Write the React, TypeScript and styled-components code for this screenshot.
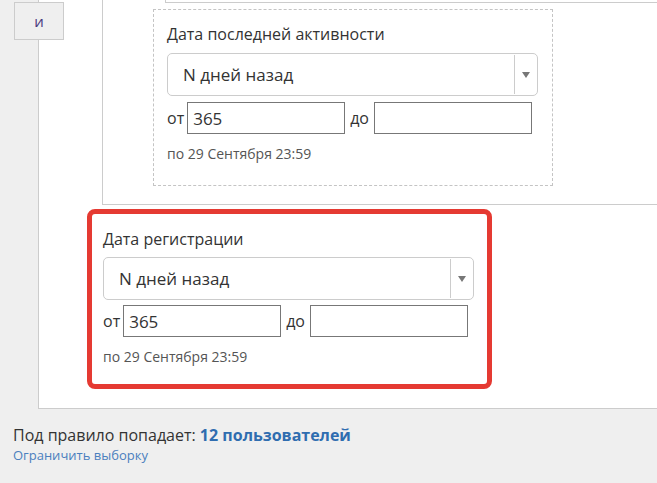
import React from "react";
import styled, { createGlobalStyle } from "styled-components";

const GlobalStyle = createGlobalStyle`
  html, body {
    margin: 0;
    padding: 0;
    background: #efefef;
    font-family: "Open Sans", "Liberation Sans", Arial, sans-serif;
    color: #333;
  }
  * { box-sizing: border-box; }
`;

const Page = styled.div`
  position: relative;
  width: 657px;
  height: 483px;
  overflow: hidden;
`;

const LogicTag = styled.div`
  position: absolute;
  left: 14px;
  top: 2px;
  width: 50px;
  height: 38px;
  background: #efefef;
  border: 1px solid #ccc;
  display: flex;
  align-items: center;
  justify-content: center;
  font-size: 15px;
  color: #4a3c7e;
  z-index: 2;
`;

const Panel = styled.div`
  margin-left: 38px;
  background: #fff;
  border-left: 1px solid #ccc;
  border-bottom: 1px solid #ccc;
  padding-bottom: 19px;
`;

const Group = styled.div`
  margin-left: 63px;
  border-left: 1px solid #ccc;
  border-bottom: 1px solid #ccc;
  padding-bottom: 18px;
`;

const PrevField = styled.div`
  margin-left: 62px;
  height: 3px;
  border-left: 1px solid #ccc;
  border-bottom: 1px solid #ccc;
`;

const DashedBox = styled.div`
  margin: 6px 0 0 50px;
  width: 400px;
  border: 1px dashed #c4c4c4;
  padding: 14px 13px 22px 13px;
`;

const HighlightBox = styled.div`
  margin: 4px 0 0 48px;
  width: 405px;
  border: 5px solid #e53a32;
  border-radius: 8px;
  padding: 15px 11px 18px 11px;
`;

const Label = styled.div<{ $tight?: boolean }>`
  font-size: 16px;
  line-height: 20px;
  color: #333;
  margin-bottom: ${(p) => (p.$tight ? "8px" : "9px")};
`;

const Select = styled.div`
  width: 371px;
  height: 43px;
  border: 1px solid #ccc;
  border-radius: 5px;
  display: flex;
  align-items: stretch;
`;

const SelectValue = styled.div`
  flex: 1;
  display: flex;
  align-items: center;
  padding-left: 15px;
  font-size: 17px;
  color: #333;
`;

const SelectArrow = styled.div`
  width: 23px;
  border-left: 1px solid #ccc;
  display: flex;
  align-items: center;
  justify-content: center;
  margin: 1px 0;
`;

const Range = styled.div<{ $tight?: boolean }>`
  display: flex;
  align-items: center;
  margin-top: ${(p) => (p.$tight ? "5px" : "6px")};
`;

const RangeWord = styled.span<{ $gap?: boolean }>`
  font-size: 16px;
  color: #333;
  margin-right: ${(p) => (p.$gap ? "5px" : "3px")};
  margin-left: ${(p) => (p.$gap ? "5px" : "0")};
`;

const NumInput = styled.input`
  width: 158px;
  height: 32px;
  border: 1px solid #777;
  border-radius: 0;
  padding: 0 5px;
  font-family: inherit;
  font-size: 17px;
  color: #333;
  outline: none;
`;

const Hint = styled.div`
  margin-top: 11px;
  font-size: 14px;
  line-height: 18px;
  color: #555;
`;

const Summary = styled.div`
  margin: 16px 0 0 13px;
  font-size: 16px;
  line-height: 21px;
  color: #333;
`;

const Count = styled.b`
  color: #2f6db0;
  font-weight: 700;
`;

const Link = styled.a`
  display: block;
  margin-left: 13px;
  font-size: 13px;
  line-height: 19px;
  color: #4b7fbe;
  text-decoration: none;
`;

function DateField({ label, tight }: { label: string; tight?: boolean }) {
  return (
    <>
      <Label $tight={tight}>{label}</Label>
      <Select>
        <SelectValue>N дней назад</SelectValue>
        <SelectArrow>
          <svg width="8" height="6" viewBox="0 0 8 6">
            <path d="M0 0 H8 L4 6 Z" fill="#777" />
          </svg>
        </SelectArrow>
      </Select>
      <Range $tight={tight}>
        <RangeWord>от</RangeWord>
        <NumInput defaultValue="365" />
        <RangeWord $gap>до</RangeWord>
        <NumInput defaultValue="" />
      </Range>
      <Hint>по 29 Сентября 23:59</Hint>
    </>
  );
}

export default function App() {
  return (
    <Page>
      <GlobalStyle />
      <LogicTag>и</LogicTag>
      <Panel>
        <Group>
          <PrevField />
          <DashedBox>
            <DateField label="Дата последней активности" />
          </DashedBox>
        </Group>
        <HighlightBox>
          <DateField label="Дата регистрации" tight />
        </HighlightBox>
      </Panel>
      <Summary>
        Под правило попадает: <Count>12 пользователей</Count>
      </Summary>
      <Link href="#">Ограничить выборку</Link>
    </Page>
  );
}
